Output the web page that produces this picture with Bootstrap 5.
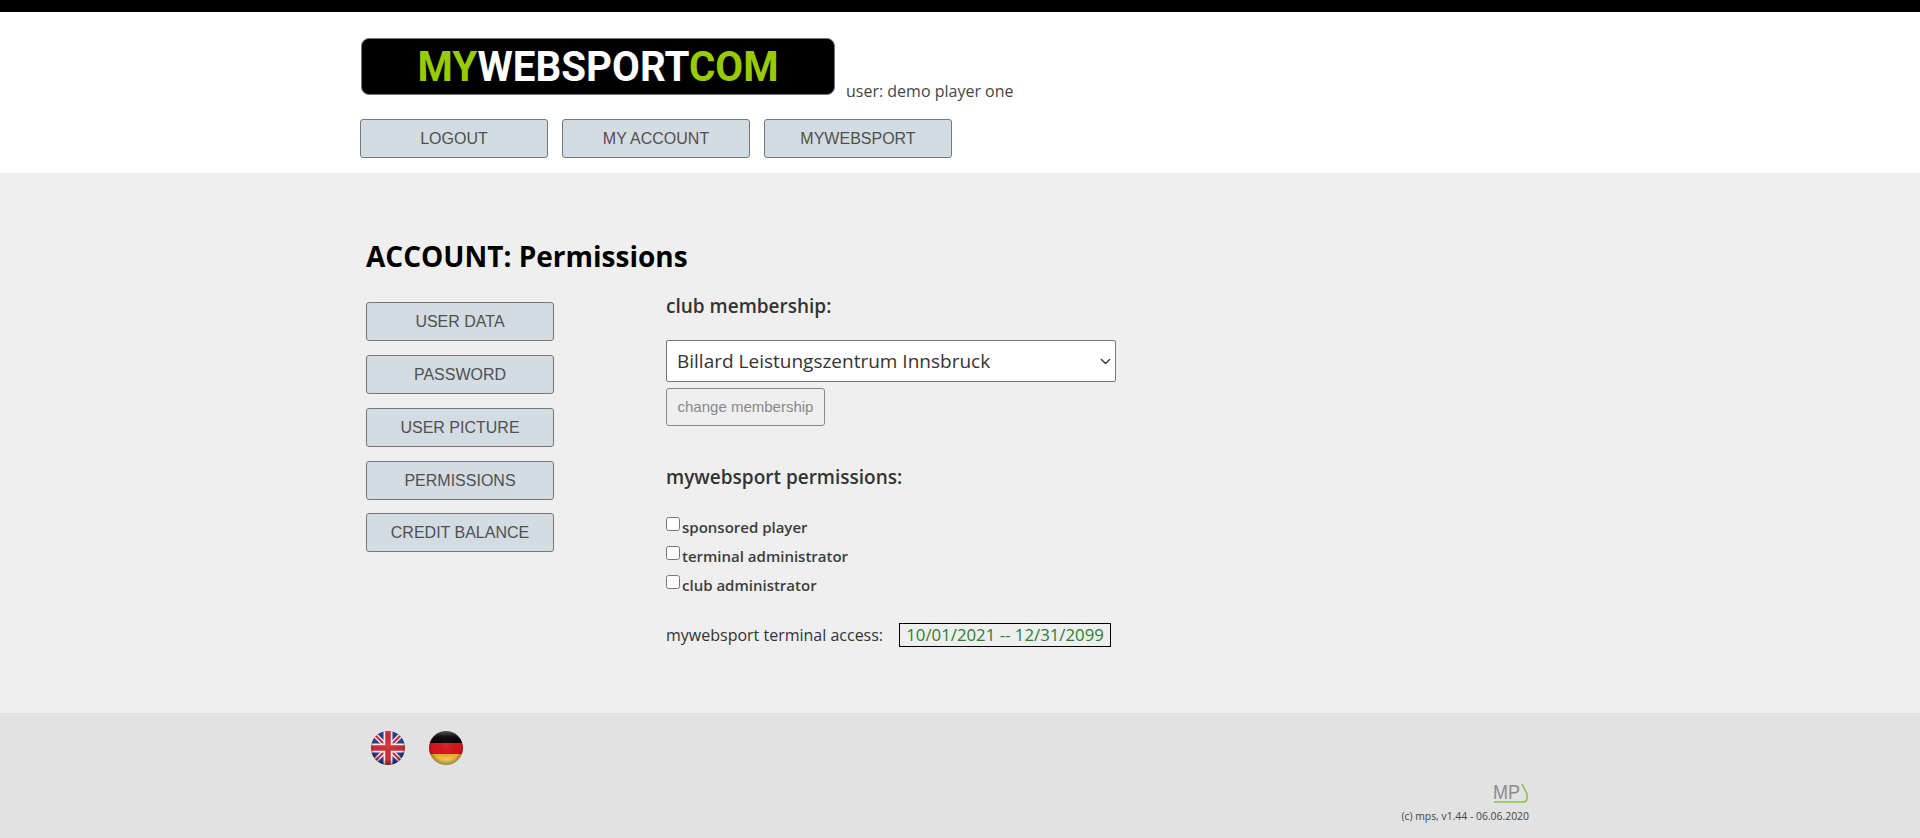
<!DOCTYPE html>
<html lang="en">
<head>
  <meta charset="UTF-8">
  <meta name="viewport" content="width=device-width, initial-scale=1.0">
  <title>ACCOUNT: Permissions</title>
  <link rel="stylesheet" href="https://cdn.jsdelivr.net/npm/bootstrap@5.3.0/dist/css/bootstrap.min.css">
  <style>
    body {
      font-family: "Open Sans", "Noto Sans", sans-serif;
      background: #e2e2e2;
      color: #333;
      font-size: 16px;
    }
    .page-top {
      background: #fff;
      border-top: 12px solid #000;
      height: 173px;
      padding-top: 26px;
    }
    .page-wrap { width: 1200px; margin: 0 auto; }
    .brand-logo {
      width: 474px;
      height: 57px;
      margin-left: 1px;
      background: #000;
      border-radius: 8px;
      border: 1px solid #777;
      font-family: "Roboto", sans-serif;
      font-weight: 700;
      font-size: 42px;
      line-height: 55px;
      color: #fff;
      text-align: center;
    }
    .brand-text { display: inline-block; transform: scaleX(.96); }
    .brand-text span { color: #9c0; }
    .user-name { margin-left: 11px; font-size: 16px; line-height: 20px; color: #444; position: relative; top: 6px; }
    .gray-btn {
      width: 188px;
      height: 39px;
      padding: 0;
      background: #d3dce2;
      border: 1px solid #777;
      border-radius: 3px;
      font-family: "Liberation Sans", Arial, sans-serif;
      font-size: 16px;
      line-height: 37px;
      color: #505050;
    }
    .top-btns { gap: 14px; margin-top: 24px; }
    .page-main { background: #efefef; height: 540px; }
    .main-inner { padding-left: 6px; }
    .page-title {
      font-size: 28px;
      font-weight: 700;
      color: #000;
      margin: 0;
      padding-top: 64px;
      line-height: 38px;
    }
    .side-btns { width: 300px; gap: 14px; padding-top: 27px; }
    .side-btns .gray-btn:last-child { margin-top: -1px; }
    .side-body { padding-top: 19px; }
    .sub-title { font-size: 19px; font-weight: 600; line-height: 24px; margin: 0; color: #333; }
    .sub-title-next { margin-top: 39px; }
    .club-select {
      width: 450px;
      height: 42px;
      margin-top: 22px;
      padding: 0 10px;
      font-size: 19px;
      color: #333;
      border: 1px solid #767676;
      border-radius: 2px;
      background-position: right 3px center;
      background-size: 13px 11px;
    }
    .change-btn {
      display: block;
      margin-top: 6px;
      width: 159px;
      height: 38px;
      padding: 0;
      background: #efefef;
      border: 1px solid #888;
      border-radius: 3px;
      font-family: "Liberation Sans", Arial, sans-serif;
      font-size: 15px;
      color: #888;
    }
    .perm-list { margin-top: 24px; }
    .perm-row { height: 29px; font-size: 15px; font-weight: 600; line-height: 29px; color: #3c3c3c; }
    .perm-row input { margin: 0 2px 0 0; position: relative; top: -2px; width: 14px; height: 14px; }
    .access-row { margin-top: 23px; font-size: 16px; }
    .access-dates {
      display: inline-block;
      margin-left: 12px;
      padding: 0 6px;
      border: 1px solid #000;
      color: #2e7d32;
      font-size: 16.8px;
      line-height: 22px;
    }
    .page-foot { height: 125px; background: #e2e2e2; padding-top: 18px; }
    .foot-inner { padding-right: 31px; }
    .lang-flags { gap: 24px; margin-left: 11px; }
    .foot-mark { margin-top: 15px; }
    .foot-info { font-size: 10.4px; line-height: 14px; color: #444; text-align: right; margin-top: 5px; }
  </style>
</head>
<body>
  <div class="page-top">
    <div class="page-wrap">
      <div class="d-flex align-items-end">
        <div class="brand-logo"><div class="brand-text"><span>MY</span>WEBSPORT<span>COM</span></div></div>
        <div class="user-name">user: demo player one</div>
      </div>
      <div class="d-flex top-btns">
        <button class="btn gray-btn">LOGOUT</button>
        <button class="btn gray-btn">MY ACCOUNT</button>
        <button class="btn gray-btn">MYWEBSPORT</button>
      </div>
    </div>
  </div>

  <div class="page-main">
    <div class="page-wrap main-inner">
      <h1 class="page-title">ACCOUNT: Permissions</h1>
      <div class="d-flex">
        <div class="d-flex flex-column align-items-start side-btns">
          <button class="btn gray-btn">USER DATA</button>
          <button class="btn gray-btn">PASSWORD</button>
          <button class="btn gray-btn">USER PICTURE</button>
          <button class="btn gray-btn">PERMISSIONS</button>
          <button class="btn gray-btn">CREDIT BALANCE</button>
        </div>
        <div class="side-body">
          <h2 class="sub-title">club membership:</h2>
          <select class="form-select club-select">
            <option>Billard Leistungszentrum Innsbruck</option>
          </select>
          <button class="btn change-btn">change membership</button>
          <h2 class="sub-title sub-title-next">mywebsport permissions:</h2>
          <div class="perm-list">
            <div class="perm-row"><input type="checkbox">sponsored player</div>
            <div class="perm-row"><input type="checkbox">terminal administrator</div>
            <div class="perm-row"><input type="checkbox">club administrator</div>
          </div>
          <div class="access-row">mywebsport terminal access: <span class="access-dates">10/01/2021 -- 12/31/2099</span></div>
        </div>
      </div>
    </div>
  </div>

  <div class="page-foot">
    <div class="page-wrap foot-inner">
      <div class="d-flex lang-flags">
        <svg width="34" height="34" viewBox="0 0 34 34">
          <defs>
            <clipPath id="uk-clip"><circle cx="17" cy="17" r="17"/></clipPath>
            <radialGradient id="ball" cx=".5" cy=".42" r=".58">
              <stop offset="0" stop-color="#fff" stop-opacity=".08"/>
              <stop offset=".72" stop-color="#000" stop-opacity="0"/>
              <stop offset="1" stop-color="#000" stop-opacity=".4"/>
            </radialGradient>
          </defs>
          <g clip-path="url(#uk-clip)">
            <rect width="34" height="34" fill="#2a3a8c"/>
            <path d="M0 0 34 34M0 34 34 0" stroke="#e8e8ee" stroke-width="5"/>
            <path d="M0 0 34 34M0 34 34 0" stroke="#cf2b36" stroke-width="2"/>
            <path d="M17 0V34M0 17H34" stroke="#eee" stroke-width="9"/>
            <path d="M17 0V34M0 17H34" stroke="#cf2b36" stroke-width="5.5"/>
            <rect width="34" height="34" fill="url(#ball)"/>
          </g>
        </svg>
        <svg width="34" height="34" viewBox="0 0 34 34">
          <defs>
            <clipPath id="de-clip"><circle cx="17" cy="17" r="17"/></clipPath>
            <linearGradient id="de-black" x1="0" y1="0" x2="0" y2="1">
              <stop offset="0" stop-color="#555"/>
              <stop offset=".5" stop-color="#0c0c0c"/>
              <stop offset="1" stop-color="#000"/>
            </linearGradient>
            <linearGradient id="de-gold" x1="0" y1="0" x2="0" y2="1">
              <stop offset="0" stop-color="#e0ac1e"/>
              <stop offset="1" stop-color="#f7e27c"/>
            </linearGradient>
          </defs>
          <g clip-path="url(#de-clip)">
            <rect width="34" height="12" fill="url(#de-black)"/>
            <rect y="12" width="34" height="11" fill="#d5141c"/>
            <rect y="23" width="34" height="11" fill="url(#de-gold)"/>
            <rect width="34" height="34" fill="url(#ball)"/>
          </g>
        </svg>
      </div>
      <div class="d-flex flex-column align-items-end foot-mark">
        <svg width="37" height="24" viewBox="0 0 37 24">
          <text x="1" y="19" font-family="Liberation Sans, sans-serif" font-size="20" fill="#8c8c8c" textLength="27" lengthAdjust="spacingAndGlyphs">MP</text>
          <path d="M30 4 35 14V18Q35 22 31 22H2" fill="none" stroke="#8cc63f" stroke-width="1.6"/>
        </svg>
        <div class="foot-info">(c) mps, v1.44 - 06.06.2020</div>
      </div>
    </div>
  </div>
  <script src="https://cdn.jsdelivr.net/npm/bootstrap@5.3.0/dist/js/bootstrap.bundle.min.js"></script>
</body>
</html>
